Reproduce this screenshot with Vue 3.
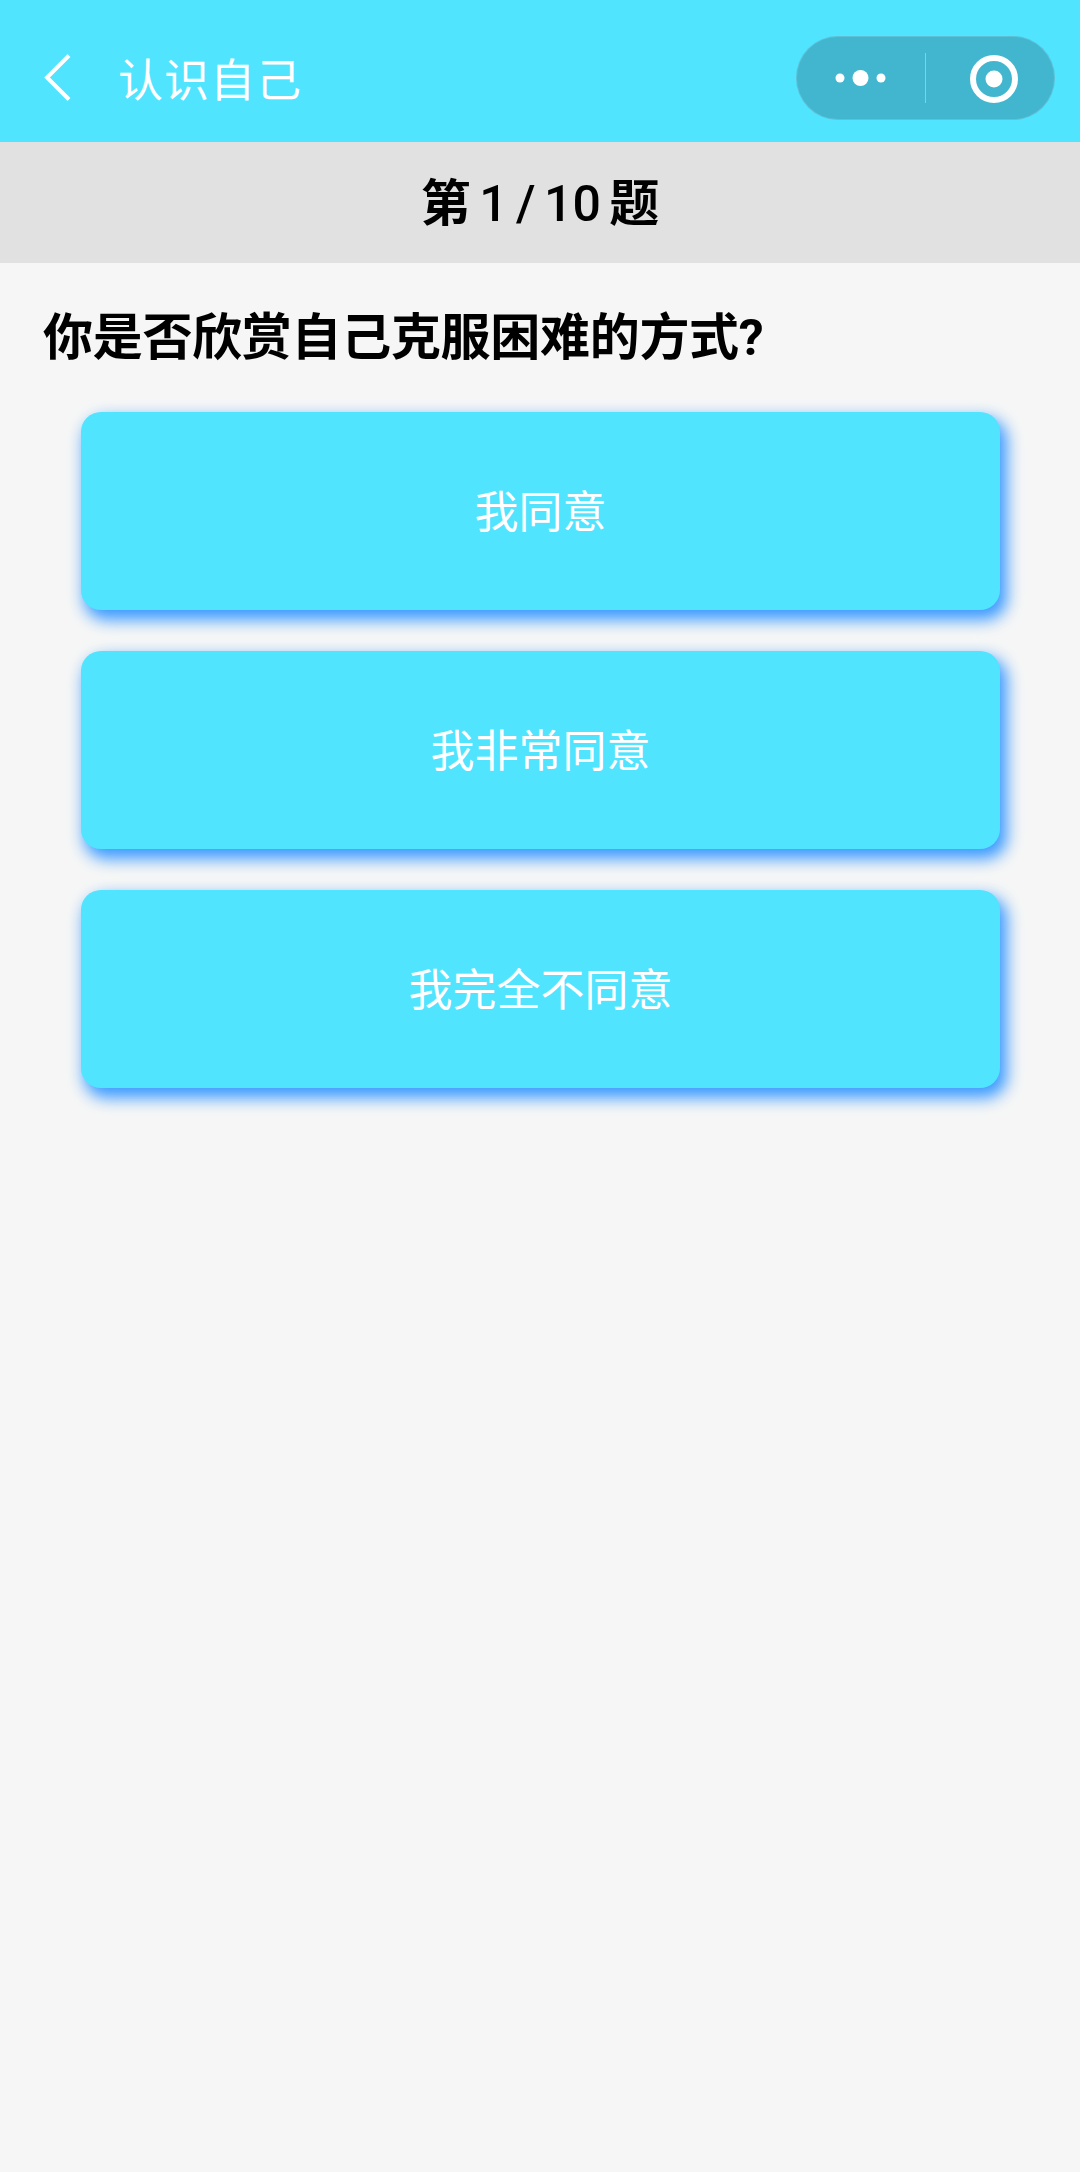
<template>
  <div class="page">
    <header class="nav">
      <svg class="back" width="30" height="52" viewBox="0 0 30 52">
        <path d="M26 3.5 L4 25.500 L26 47.500" fill="none" stroke="#fff" stroke-width="4" />
      </svg>
      <span class="nav-title">认识自己</span>
      <div class="capsule">
        <svg class="dots" width="52" height="18" viewBox="0 0 52 18">
          <circle cx="5" cy="9" r="4.500" fill="#fff" />
          <circle cx="25.500" cy="9" r="8" fill="#fff" />
          <circle cx="46" cy="9" r="4.500" fill="#fff" />
        </svg>
        <span class="divider"></span>
        <svg class="target" width="48" height="48" viewBox="0 0 48 48">
          <circle cx="24" cy="24" r="21" fill="none" stroke="#fff" stroke-width="6" />
          <circle cx="24" cy="24" r="8.500" fill="#fff" />
        </svg>
      </div>
    </header>

    <div class="progress">第 <span class="count">{{ current }} / {{ total }}</span> 题</div>

    <h1 class="question">{{ question }}</h1>

    <div class="options">
      <button v-for="option in options" :key="option" class="option">{{ option }}</button>
    </div>
  </div>
</template>

<script setup>
const current = 1;
const total = 10;
const question = "你是否欣赏自己克服困难的方式?";
const options = ["我同意", "我非常同意", "我完全不同意"];
</script>

<style>
html,
body {
  background: #f6f6f6;
}
</style>

<style scoped>
.page {
  min-height: 2172px;
  background: #f6f6f6;
  font-family: "Roboto", "Noto Sans CJK SC", sans-serif;
}

.nav {
  display: flex;
  align-items: center;
  height: 142px;
  padding: 14px 25px 0 43px;
  box-sizing: border-box;
  background: #50e4ff;
  color: #fff;
}

.back {
  flex: none;
}

.nav-title {
  margin-left: 45px;
  margin-bottom: 2px;
  font-size: 45px;
  font-weight: 400;
  letter-spacing: 1px;
}

.capsule {
  display: flex;
  align-items: center;
  width: 259px;
  height: 84px;
  margin-left: auto;
  box-sizing: border-box;
  padding-left: 39px;
  border-radius: 42px;
  background: #42b6cf;
  box-shadow: inset 0 0 0 1px rgba(255, 255, 255, 0.15);
}

.divider {
  flex: none;
  width: 1px;
  height: 50px;
  margin-left: 38px;
  background: rgba(255, 255, 255, 0.35);
}

.target {
  flex: none;
  margin-left: 44px;
  margin-top: 2px;
}

.progress {
  height: 121px;
  padding-top: 4px;
  box-sizing: border-box;
  background: #e1e1e1;
  color: #000;
  font-size: 50px;
  font-weight: 700;
  line-height: 117px;
  text-align: center;
  word-spacing: -4px;
}

.count {
  font-weight: 500;
}

.question {
  margin: 0;
  padding: 40px 43px 0;
  color: #000;
  font-size: 50px;
  font-weight: 700;
  line-height: 70px;
  letter-spacing: -0.3px;
}

.options {
  display: flex;
  flex-direction: column;
  gap: 41px;
  padding: 39px 80px 0 81px;
}

.option {
  height: 198px;
  padding: 0 0 5px;
  border: none;
  border-radius: 20px;
  background: #50e4ff;
  box-shadow: 5px 8px 16px 2px #3a9aff;
  color: #fff;
  font-family: inherit;
  font-size: 44px;
  font-weight: 400;
}
</style>
